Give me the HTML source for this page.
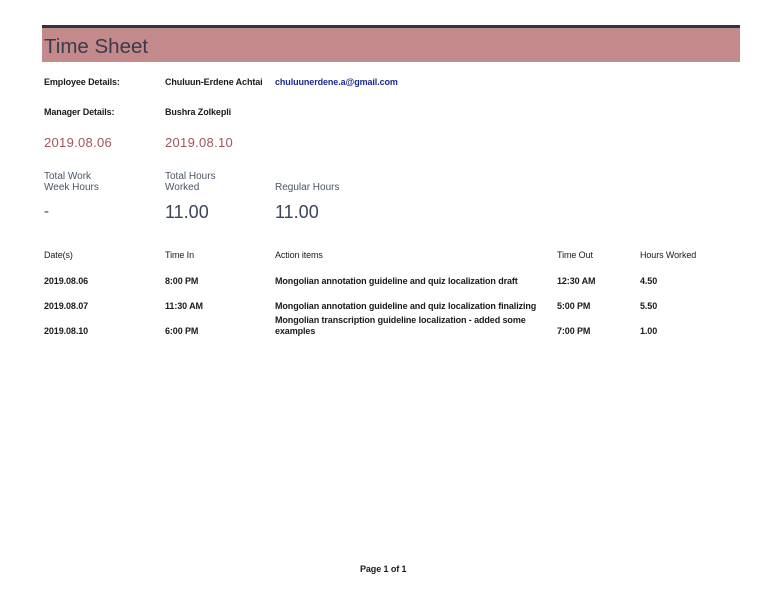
<!DOCTYPE html>
<html><head><meta charset="utf-8"><style>
body{margin:0;width:768px;height:594px;background:#fff;position:relative;overflow:hidden;font-family:"Liberation Sans",sans-serif;}
.a{position:absolute;white-space:nowrap;}
.s{font-size:9px;letter-spacing:-0.1px;color:#1a1a1a;font-weight:bold;}
.n{font-size:9px;letter-spacing:-0.1px;color:#1a1a1a;}
.d{font-size:13px;color:#a0555c;letter-spacing:0.3px;}
.l{font-size:10px;color:#4a5568;line-height:11px;}
.b{font-size:18px;color:#3a4558;}
</style></head><body>
<div class="a" style="left:42px;top:25px;width:698px;height:3px;background:#2e3440"></div>
<div class="a" style="left:42px;top:28px;width:698px;height:34px;background:#c48a8b"></div>
<div class="a" style="left:44px;top:35px;font-size:20.5px;color:#3a3a48">Time Sheet</div>

<div class="a s" style="left:44px;top:77px">Employee Details:</div>
<div class="a s" style="left:165px;top:77px">Chuluun-Erdene Achtai</div>
<div class="a s" style="left:275px;top:77px;color:#1a2a90">chuluunerdene.a@gmail.com</div>
<div class="a s" style="left:44px;top:107px">Manager Details:</div>
<div class="a s" style="left:165px;top:107px">Bushra Zolkepli</div>

<div class="a d" style="left:44px;top:135px">2019.08.06</div>
<div class="a d" style="left:165px;top:135px">2019.08.10</div>

<div class="a l" style="left:44px;top:171px">Total Work<br>Week Hours</div>
<div class="a l" style="left:165px;top:171px">Total Hours<br>Worked</div>
<div class="a l" style="left:275px;top:182px">Regular Hours</div>

<div class="a b" style="left:44px;top:203px;font-size:15px">-</div>
<div class="a b" style="left:165px;top:202px">11.00</div>
<div class="a b" style="left:275px;top:202px">11.00</div>

<div class="a n" style="left:44px;top:250px">Date(s)</div>
<div class="a n" style="left:165px;top:250px">Time In</div>
<div class="a n" style="left:275px;top:250px">Action items</div>
<div class="a n" style="left:557px;top:250px">Time Out</div>
<div class="a n" style="left:640px;top:250px">Hours Worked</div>

<div class="a s" style="left:44px;top:276px">2019.08.06</div>
<div class="a s" style="left:165px;top:276px">8:00 PM</div>
<div class="a s" style="left:275px;top:276px">Mongolian annotation guideline and quiz localization draft</div>
<div class="a s" style="left:557px;top:276px">12:30 AM</div>
<div class="a s" style="left:640px;top:276px">4.50</div>

<div class="a s" style="left:44px;top:301px">2019.08.07</div>
<div class="a s" style="left:165px;top:301px">11:30 AM</div>
<div class="a s" style="left:275px;top:301px">Mongolian annotation guideline and quiz localization finalizing</div>
<div class="a s" style="left:557px;top:301px">5:00 PM</div>
<div class="a s" style="left:640px;top:301px">5.50</div>

<div class="a s" style="left:44px;top:326px">2019.08.10</div>
<div class="a s" style="left:165px;top:326px">6:00 PM</div>
<div class="a s" style="left:275px;top:315px;line-height:11px">Mongolian transcription guideline localization - added some<br>examples</div>
<div class="a s" style="left:557px;top:326px">7:00 PM</div>
<div class="a s" style="left:640px;top:326px">1.00</div>

<div class="a s" style="left:360px;top:564px">Page 1 of 1</div>
</body></html>
